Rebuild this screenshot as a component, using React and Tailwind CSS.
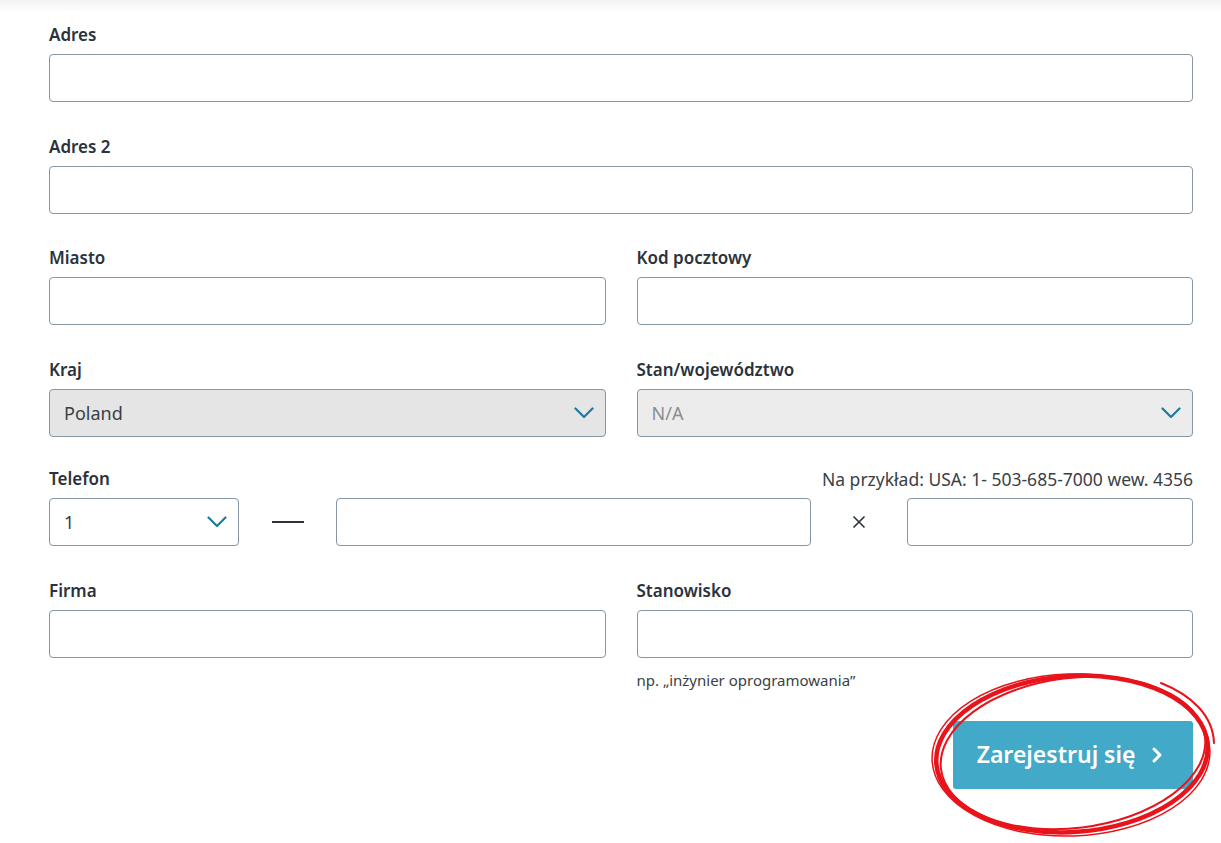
import { ChevronRight } from 'lucide-react'

const font = { fontFamily: '"Noto Sans", "Open Sans", sans-serif' }

function Label({ children, right }) {
  return (
    <div className="flex items-end justify-between h-6 mb-[7px]">
      <span className="text-[17px] font-semibold text-[#2b323b] leading-6">{children}</span>
      {right && <span className="text-[17.5px] text-[#3a3f45] leading-6">{right}</span>}
    </div>
  )
}

function Input() {
  return (
    <input
      type="text"
      className="block w-full h-12 rounded-[4px] border border-[#8796a5] bg-white px-3.5 text-[18px] outline-none"
    />
  )
}

function Chevron() {
  return (
    <svg width="20" height="12" viewBox="0 0 20 12" fill="none" className="shrink-0">
      <polyline points="1.5,1.5 10,10 18.5,1.5" stroke="#1b7c9d" strokeWidth="2.2" strokeLinecap="round" strokeLinejoin="round" />
    </svg>
  )
}

function Select({ value, muted, bg = 'bg-white' }) {
  return (
    <div className={`flex items-center justify-between h-12 rounded-[4px] border border-[#8796a5] ${bg} pl-3.5 pr-[11px]`}>
      <span className={`text-[18px] ${muted ? 'text-[#8a8d91]' : 'text-[#3a3f45]'}`}>{value}</span>
      <Chevron />
    </div>
  )
}

function Field({ label, children }) {
  return (
    <div>
      <Label>{label}</Label>
      {children}
    </div>
  )
}

function Scribble() {
  return (
    <svg
      className="absolute pointer-events-none"
      style={{ left: -24, top: -52, width: 288, height: 172 }}
      viewBox="0 0 288 172"
      fill="none"
    >
      <g stroke="#e8131b" fill="none">
        <ellipse cx="143" cy="85" rx="136" ry="78" transform="rotate(-4 143 85)" strokeWidth="4.5" />
        <ellipse cx="144" cy="84" rx="133" ry="75" transform="rotate(-7 144 84)" strokeWidth="2" />
        <ellipse cx="142" cy="86" rx="139" ry="81" transform="rotate(-2 142 86)" strokeWidth="1.5" />
        <path d="M232 14 C 262 26, 284 46, 285 74" strokeWidth="2" strokeLinecap="round" />
      </g>
    </svg>
  )
}

export default function App() {
  return (
    <div className="min-h-screen bg-white" style={font}>
      <div className="h-3 -mb-3 bg-gradient-to-b from-black/[0.05] to-transparent" />
      <div className="pl-[49px] pr-[28px] pt-[23px] pb-12 flex flex-col gap-[32px]">
        <Field label="Adres"><Input /></Field>
        <div className="mt-px"><Field label="Adres 2"><Input /></Field></div>
        <div className="grid grid-cols-2 gap-x-[31px]">
          <Field label="Miasto"><Input /></Field>
          <Field label="Kod pocztowy"><Input /></Field>
        </div>
        <div className="grid grid-cols-2 gap-x-[31px] mt-px">
          <Field label="Kraj"><Select value="Poland" bg="bg-[#e5e5e5]" /></Field>
          <Field label="Stan/województwo"><Select value="N/A" muted bg="bg-[#ececec]" /></Field>
        </div>
        <div className="-mt-[2px]">
          <Label right="Na przykład: USA: 1- 503-685-7000 wew. 4356">Telefon</Label>
          <div className="grid grid-cols-[190px_97px_1fr_96px_286px] items-center">
            <Select value="1" />
            <div className="flex justify-center">
              <div className="w-8 h-[2px] bg-[#2b323b]" />
            </div>
            <Input />
            <div className="flex justify-center">
              <svg width="14" height="14" viewBox="0 0 14 14">
                <path d="M1.5 1.5 L12.5 12.5 M12.5 1.5 L1.5 12.5" stroke="#2b323b" strokeWidth="1.6" />
              </svg>
            </div>
            <Input />
          </div>
        </div>
        <div className="grid grid-cols-2 gap-x-[31px] mt-px">
          <Field label="Firma"><Input /></Field>
          <div>
            <Label>Stanowisko</Label>
            <Input />
            <p className="mt-[11px] text-[15px] text-[#3a3f45]">np. „inżynier oprogramowania”</p>
          </div>
        </div>
        <div className="flex justify-end -mt-[3px]">
          <div className="relative">
            <button className="flex items-center gap-2.5 h-[68px] w-[240px] justify-center rounded-[3px] bg-[#42a9c8] text-white text-[23px] font-semibold">
              Zarejestruj się
              <ChevronRight className="w-6 h-6" strokeWidth={3} />
            </button>
            <Scribble />
          </div>
        </div>
      </div>
    </div>
  )
}
